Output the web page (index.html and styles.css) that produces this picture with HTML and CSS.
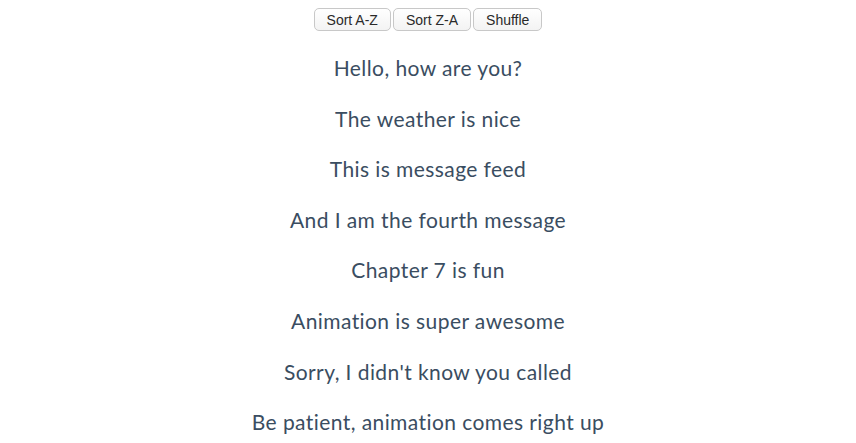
FILE: index.html
```html
<!DOCTYPE html>
<html>
<head>
<meta charset="utf-8">
<link rel="stylesheet" href="styles.css">
</head>
<body>
<div class="app">
  <div class="controls">
    <button class="btn">Sort A-Z</button>
    <button class="btn">Sort Z-A</button>
    <button class="btn">Shuffle</button>
  </div>
  <ul class="feed">
    <li>Hello, how are you?</li>
    <li>The weather is nice</li>
    <li>This is message feed</li>
    <li>And I am the fourth message</li>
    <li>Chapter 7 is fun</li>
    <li>Animation is super awesome</li>
    <li>Sorry, I didn't know you called</li>
    <li>Be patient, animation comes right up</li>
  </ul>
</div>
</body>
</html>
```
FILE: styles.css
```css
html, body {
  margin: 0;
  background: #ffffff;
}
.app {
  padding-top: 8px;
  font-family: Lato, "Noto Sans", sans-serif;
  color: #2c3e50;
  text-align: center;
}
.controls {
  display: flex;
  justify-content: center;
  gap: 2px;
}
.btn {
  font-family: "Liberation Sans", Arial, sans-serif;
  font-size: 14px;
  color: #2a2a2a;
  height: 23px;
  padding: 0 12px;
  border: 1px solid #c8c8c8;
  border-radius: 5px;
  background: linear-gradient(#ffffff, #f3f3f3);
}
.feed {
  list-style: none;
  margin: 0;
  padding: 0;
  margin-top: 25px;
  display: flex;
  flex-direction: column;
  gap: 26.6px;
  font-size: 21px;
  font-weight: 400;
  line-height: 24px;
  letter-spacing: 0.42px;
  color: #3a4d61;
}
```
